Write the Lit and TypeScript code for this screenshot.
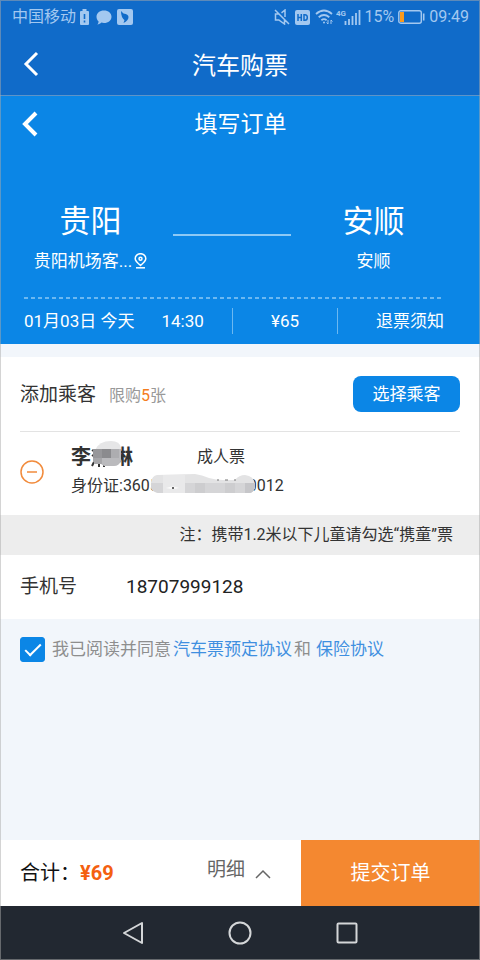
import { LitElement, html, css, svg } from "lit";
import { customElement, state } from "lit/decorators.js";

const shared = css`
  *, *::before, *::after { box-sizing: border-box; }
  svg { display: block; flex: none; }
  button { font: inherit; color: inherit; background: none; border: 0; padding: 0; margin: 0; cursor: pointer; }
  a { color: inherit; text-decoration: none; }
  h1, h2, p { margin: 0; font: inherit; }
`;

@customElement("status-bar")
class StatusBar extends LitElement {
  static styles = [shared, css`
    :host { display: flex; align-items: center; justify-content: space-between; height: 32px; padding: 2px 11px 0 12px; color: #a3c8f0; font-size: 16px; line-height: 20px; }
    .group { display: flex; align-items: center; }
    .left { gap: 4px; }
    .right { gap: 3px; }
  `];

  render() {
    return html`
      <div class="group left">
        <span>中国移动</span>
        <svg width="9" height="16" viewBox="0 0 9 16"><path d="M2.500 0h4v2H8q1 0 1 1v12q0 1-1 1H1q-1 0-1-1V3q0-1 1-1h1.500z" fill="currentColor"/><path d="M4.500 5v5M4.500 11.500v2" stroke="#106bc9" stroke-width="1.600"/></svg>
        <svg width="20" height="15" viewBox="-3 0 20 15"><path d="M8 .5c4.400 0 7.500 2.700 7.500 6.200S12.400 13 8 13c-1 0-1.800-.1-2.600-.4C4.500 13.600 3 14.400 1.200 14.500c.9-.9 1.300-1.900 1.400-3.100C1.200 10.200.5 8.600.5 6.700.5 3.200 3.600.5 8 .5z" fill="currentColor"/></svg>
        <svg width="16" height="16" viewBox="0 0 16 16"><rect width="16" height="16" rx="2" fill="currentColor"/><path d="M4 2l2.500 2.500Q11.500 5 11.500 8q0 3.500-5 6l1-3Q4 8.500 4 2z" fill="#106bc9"/></svg>
      </div>
      <div class="group right">
        <svg width="16" height="16" viewBox="0 0 16 16" fill="none" stroke="currentColor" stroke-width="1.500"><path d="M1 1l14 14M4.500 5H1.500v6h3.300l5.700 4V11M7.500 3.800L11 1v7"/></svg>
        <svg width="19" height="15" viewBox="-1 0 19 15"><rect x="1" width="15" height="15" rx="2" fill="currentColor"/><path d="M4 4v7M7.300 4v7M4 7.500h3.300M10 4.700v5.600h1q2.300 0 2.300-2.800T11 4.700z" fill="none" stroke="#106bc9" stroke-width="1.500"/></svg>
        <svg width="18" height="16" viewBox="0 0 18 16" fill="none" stroke="currentColor" stroke-width="1.800"><path d="M1 5q8-7 16 0M3.700 8.200q5.300-4.500 10.600 0M6.400 11.200q2.600-2.200 5.200 0"/><circle cx="9" cy="13.500" r="1" fill="currentColor" stroke="none"/><path d="M13 11v4l-1.500-1.500M16 15v-4l1.500 1.500" stroke-width="1"/></svg>
        <svg width="25" height="17" viewBox="0 0 25 17"><text x="0" y="7" font-size="8" font-weight="700" fill="currentColor">4G</text><path d="M9.500 12v4M13 10v6M16.500 7v9M20 4v12M23.500 1v15" stroke="currentColor" stroke-width="1.800"/></svg>
        <span>15%</span>
        <svg width="29" height="14" viewBox="-1 0 29 14"><rect x=".8" y=".8" width="22.500" height="12.400" rx="2" fill="none" stroke="currentColor" stroke-width="1.400"/><rect x="2" y="2" width="4" height="10" fill="#fb9a1c"/><path d="M25.700 3.500v7" stroke="currentColor" stroke-width="1.600"/></svg>
        <span>09:49</span>
      </div>`;
  }
}

const back = (w: number) => svg`<svg width="16" height="26" viewBox="0 0 16 26"><path d="M14 2L3 13l11 11" fill="none" stroke="#fff" stroke-width=${w}/></svg>`;

@customElement("trip-panel")
class TripPanel extends LitElement {
  static styles = [shared, css`
    :host { display: block; padding-bottom: 10px; background: #0b86e6; color: #fff; }
    .bar { display: grid; grid-template-columns: 80px 1fr 80px; align-items: center; height: 56px; padding-left: 1px; }
    .back { padding-left: 21px; justify-self: start; }
    .title { padding-top: 2px; text-align: center; font-size: 23px; line-height: 32px; }
    .route { display: grid; grid-template-columns: 133px 1fr 133px; align-items: start; padding: 46px 40px 0 24px; }
    .stop { display: flex; flex-direction: column; align-items: center; gap: 3px; }
    .city { font-size: 31px; line-height: 48px; }
    .station { display: flex; align-items: center; gap: 2px; font-size: 17px; line-height: 24px; white-space: nowrap; }
    .line { height: 2px; margin: 36px 16px 0 16px; background: #8ec9f5; }
    .dash { height: 2px; margin: 24px 36px 0 24px; background: repeating-linear-gradient(90deg, #6cb8f1 0 4px, transparent 4px 7px); }
    .facts { display: grid; grid-template-columns: 208px 106px 1fr; align-items: center; margin: 9px 36px 0 24px; font-size: 17px; line-height: 26px; }
    .when { display: flex; gap: 27px; white-space: nowrap; }
    .fare { border: solid #6cb8f1; border-width: 0 1px; text-align: center; }
    .rules { text-align: right; }
  `];

  render() {
    return html`
      <header class="bar">
        <button class="back" aria-label="返回">${back(4)}</button>
        <h2 class="title">填写订单</h2>
      </header>
      <div class="route">
        <div class="stop">
          <span class="city">贵阳</span>
          <span class="station">贵阳机场客...
            <svg width="13" height="16" viewBox="0 0 13 16" fill="none" stroke="#fff" stroke-width="1.500"><path d="M6.500 12.500C3 9.500 1.200 7.800 1.200 5.700a5.300 5 0 0 1 10.600 0c0 2.100-1.800 3.800-5.300 6.800z"/><circle cx="6.500" cy="5.700" r="1.500"/><path d="M2 14.800h9"/></svg>
          </span>
        </div>
        <div class="line"></div>
        <div class="stop">
          <span class="city">安顺</span>
          <span class="station">安顺</span>
        </div>
      </div>
      <div class="dash"></div>
      <div class="facts">
        <div class="when"><span>01月03日 今天</span><span>14:30</span></div>
        <span class="fare">¥65</span>
        <a class="rules" href="#rules">退票须知</a>
      </div>`;
  }
}

@customElement("passenger-card")
class PassengerCard extends LitElement {
  static styles = [shared, css`
    :host { display: block; background: #fff; color: #333; }
    .head { display: flex; align-items: center; height: 75px; margin: 0 20px; border-bottom: 1px solid #e3e3e3; }
    .label { padding-top: 2px; font-size: 19px; line-height: 28px; }
    .limit { flex: 1; padding-top: 4px; margin-left: 13px; font-size: 16px; line-height: 24px; color: #999; }
    .count { color: #f47c20; }
    .choose { width: 107px; height: 36px; border-radius: 8px; background: #0b86e6; color: #fff; font-size: 17px; line-height: 24px; }
    .person { display: flex; align-items: center; gap: 27px; height: 83px; padding: 0 20px 4px; }
    .info { display: flex; flex-direction: column; gap: 3px; font-size: 16px; line-height: 24px; }
    .row { display: flex; align-items: center; height: 26px; }
    .name { display: flex; align-items: center; width: 126px; font-size: 20px; font-weight: 700; }
    .mask { position: relative; z-index: 1; }
    .name .mask { margin: -6px -8px 0 0; }
    .id .mask { margin: -4px -7px 0 -8px; }
    .note { padding: 8px 27px; background: #ededed; font-size: 16px; line-height: 24px; text-align: right; }
    .phone { display: grid; grid-template-columns: 106px 1fr; align-items: center; height: 64px; padding: 0 20px; font-size: 19px; line-height: 28px; }
    .phone input { width: 100%; padding: 0; border: 0; outline: 0; background: none; font: inherit; color: #222; }
  `];

  render() {
    return html`
      <div class="head">
        <span class="label">添加乘客</span>
        <span class="limit">限购<span class="count">5</span>张</span>
        <button class="choose">选择乘客</button>
      </div>
      <div class="person">
        <button aria-label="删除乘客"><svg width="24" height="24" viewBox="0 0 24 24" fill="none" stroke="#f18b3c" stroke-width="1.500"><circle cx="12" cy="12" r="11"/><path d="M7 12h10"/></svg></button>
        <div class="info">
          <div class="row">
            <span class="name">李<svg class="mask" width="30" height="26" viewBox="0 0 30 26">
              <path d="M1 9l3 2M1 14l3 2M1 25l3-6M8 26v-3M13 26v-3" stroke="#333" stroke-width="2"/>
              <path d="M4 9Q8 0 20 0q9 0 10 7v3H4z" fill="#e6e6e7"/>
              <path d="M2 8h28v12q-2 5-7 5H13l-3-2H4l-2-3z" fill="#bababd"/>
              <path d="M2 8h9v9H2z" fill="#97979a"/><path d="M11 8h9v9h-9z" fill="#8b8b8e"/><path d="M20 8h8v9h-8z" fill="#adadb0"/><path d="M2 17h9v6H4l-2-3z" fill="#a6a6a9"/>
            </svg>琳</span>
            <span>成人票</span>
          </div>
          <div class="row id">
            <span>身份证:3605</span>
            <svg class="mask" width="104" height="20" viewBox="0 0 104 20">
              <path d="M0 8Q1 2 6 1l38-1q7 1 14 4 7 2 14 2h12q4-5 10-5 9 1 10 9v3q-1 5-5 6H7q-5-1-7-5z" fill="#e3e3e4"/>
              <path d="M0 9h104v4q-1 5-5 6H7q-5-1-7-5z" fill="#d5d5d7"/>
              <path d="M12 1h22v18H12z" fill="#e9e9ea"/>
              <path d="M44 9h10v10H44zM74 9h10v10H74z" fill="#cdcdcf"/><path d="M94 9h10v4q-1 5-5 6h-5z" fill="#c6c6c9"/>
              <path d="M15 14q7-3 13 0-6 2-13 0z" fill="#fafafa"/><circle cx="22" cy="14" r="1" fill="#333"/>
              <path d="M66 6h2M74 6h3M83 6h2" stroke="#777"/>
            </svg>
            <span>0012</span>
          </div>
        </div>
      </div>
      <p class="note">注：携带1.2米以下儿童请勾选“携童”票</p>
      <div class="phone">
        <label for="phone">手机号</label>
        <input id="phone" type="tel" value="18707999128">
      </div>`;
  }
}

@customElement("app-root")
class AppRoot extends LitElement {
  @state() agreed = true;

  static styles = [shared, css`
    :host { position: relative; display: flex; flex-direction: column; min-height: 100vh; box-sizing: border-box; background: #f2f6fb; font-family: Roboto, "Noto Sans CJK SC", sans-serif; }
    :host::after { content: ""; position: absolute; inset: 0; border: 1px solid rgba(170, 170, 170, .5); pointer-events: none; }
    .top { background: #106bc9; color: #fff; border-bottom: 1px solid #5e94c8; }
    .bar { display: grid; grid-template-columns: 80px 1fr 80px; align-items: center; height: 63px; }
    .back { padding-left: 23px; justify-self: start; }
    .title { padding-top: 4px; text-align: center; font-size: 24px; line-height: 32px; }
    .card { margin-top: 13px; }
    .agree { display: flex; align-items: center; gap: 2px; padding: 16px 20px; font-size: 17px; line-height: 28px; color: #8e8e8e; }
    .agree label { display: flex; align-items: center; gap: 7px; }
    .agree a { color: #3f8fe0; }
    .second { margin-left: 3px; }
    .tick { appearance: none; width: 25px; height: 25px; margin: 0; border-radius: 3px; background: #fff; border: 1px solid #0b86e6; display: grid; place-items: center; }
    .tick:checked { background: #0b86e6; }
    .tick:checked::before { content: ""; width: 16px; height: 8px; margin-top: -3px; border: solid #fff; border-width: 0 0 2px 2px; transform: rotate(-45deg); }
    .footer { display: grid; grid-template-columns: 1fr auto 179px; align-items: stretch; margin-top: auto; height: 66px; background: #fff; }
    .total { display: flex; align-items: center; padding-left: 20px; font-size: 20px; line-height: 28px; color: #111; }
    .price { color: #f4600f; font-weight: 700; }
    .detail { display: flex; align-items: center; gap: 10px; padding: 0 30px 6px 0; font-size: 19px; line-height: 28px; color: #666; }
    .detail svg { margin-top: 8px; }
    .submit { background: #f48830; color: #fff; font-size: 20px; line-height: 28px; }
    .nav { display: flex; align-items: center; justify-content: center; gap: 84px; height: 54px; background: #222831; }
  `];

  render() {
    return html`
      <div class="top">
        <status-bar></status-bar>
        <header class="bar">
          <button class="back" aria-label="返回">${back(3)}</button>
          <h1 class="title">汽车购票</h1>
        </header>
      </div>
      <trip-panel></trip-panel>
      <passenger-card class="card"></passenger-card>
      <div class="agree">
        <label><input class="tick" type="checkbox" .checked=${this.agreed} @change=${(e: Event) => (this.agreed = (e.target as HTMLInputElement).checked)}>我已阅读并同意</label>
        <a href="#ticket">汽车票预定协议</a><span>和</span><a class="second" href="#insurance">保险协议</a>
      </div>
      <div class="footer">
        <div class="total">合计：<span class="price">¥69</span></div>
        <button class="detail">明细<svg width="16" height="10" viewBox="0 0 16 10"><path d="M1 9l7-7 7 7" fill="none" stroke="#666" stroke-width="1.500"/></svg></button>
        <button class="submit" ?disabled=${!this.agreed}>提交订单</button>
      </div>
      <nav class="nav">
        <button aria-label="后退"><svg width="22" height="24" viewBox="0 0 22 24"><path d="M20 2v20L2 12z" fill="none" stroke="#d4d6d8" stroke-width="2" stroke-linejoin="round"/></svg></button>
        <button aria-label="主页"><svg width="24" height="24" viewBox="0 0 24 24"><circle cx="12" cy="12" r="10.500" fill="none" stroke="#d4d6d8" stroke-width="2"/></svg></button>
        <button aria-label="最近任务"><svg width="22" height="22" viewBox="0 0 22 22"><rect x="1.500" y="1.500" width="19" height="19" rx="1" fill="none" stroke="#d4d6d8" stroke-width="2"/></svg></button>
      </nav>`;
  }
}
